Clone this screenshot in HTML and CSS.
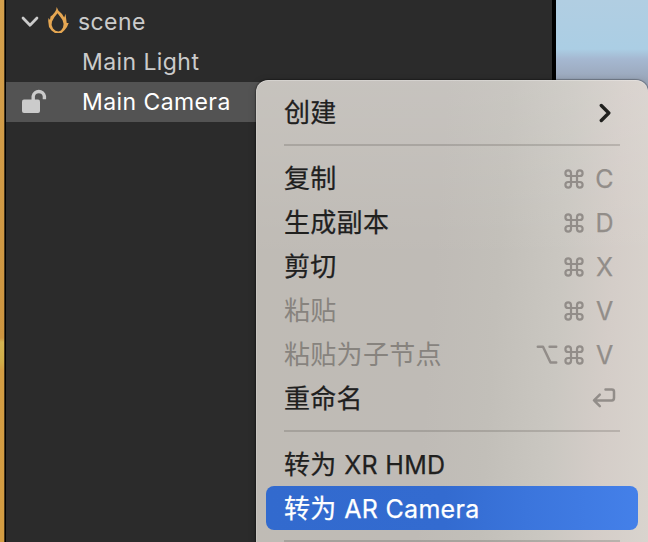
FILE: index.html
```html
<!DOCTYPE html>
<html lang="zh-CN">
<head>
<meta charset="utf-8">
<title>scene</title>
<link rel="stylesheet" href="styles.css">
</head>
<body>
<svg class="defs" aria-hidden="true">
  <symbol id="cmd" viewBox="0 0 20 20"><path d="M7 4.2V15.8A2.8 2.8 0 1 1 4.2 13H15.8A2.8 2.8 0 1 1 13 15.8V4.2A2.8 2.8 0 1 1 15.8 7H4.2A2.8 2.8 0 1 1 7 4.2Z"/></symbol>
</svg>
<div class="app">
  <div class="edge"></div>
  <div class="tree">
    <div class="row root">
      <svg class="arrow" viewBox="0 0 18 12"><path d="M2 2L9 9.3L16 2"/></svg>
      <svg class="flame" viewBox="0 0 22 28"><path fill-rule="evenodd" d="M8.7 0L10.3 3.5L14 7L16.2 10.5L17.5 6.8L18.2 12L18.7 16L20.7 16L19 20L16.7 23L13.5 26H7L3.5 23.5L1 20L.2 14L.5 11L2 13L2.5 9.5L4.5 8L7 5L8.2 2.7ZM9.5 6.2L6.5 10L4 14.5L3.6 18L5 21.4L7.5 23.8L10.5 24.5L13 23.5L15 20.5L15.6 17L14.5 13L12 9.5Z"/></svg>
      <span class="name">scene</span>
    </div>
    <div class="row"><span class="name">Main Light</span></div>
    <div class="row selected">
      <svg class="lock" viewBox="0 0 26 26"><rect x="0" y="10.5" width="18" height="13.5" rx="2"/><path d="M11.2 11V7.2A5.7 5.7 0 0 1 22.4 7.2V10.2"/></svg>
      <span class="name">Main Camera</span>
    </div>
  </div>
  <div class="sky"></div>
</div>
<div class="menu">
  <div class="item"><span class="label">创建</span><svg class="more" viewBox="0 0 13 20"><path d="M2.3 2.5L9.8 10L2.3 17.5"/></svg></div>
  <div class="line"></div>
  <div class="item"><span class="label">复制</span><span class="keys"><svg class="cmd"><use href="#cmd"/></svg><span class="key">C</span></span></div>
  <div class="item"><span class="label">生成副本</span><span class="keys"><svg class="cmd"><use href="#cmd"/></svg><span class="key">D</span></span></div>
  <div class="item"><span class="label">剪切</span><span class="keys"><svg class="cmd"><use href="#cmd"/></svg><span class="key">X</span></span></div>
  <div class="item off"><span class="label">粘贴</span><span class="keys"><svg class="cmd"><use href="#cmd"/></svg><span class="key">V</span></span></div>
  <div class="item off"><span class="label">粘贴为子节点</span><span class="keys"><svg class="opt" viewBox="0 0 22 20"><path d="M1.8 1.8H7L14.5 17.5H20.2M13.6 1.8H20.2"/></svg><svg class="cmd"><use href="#cmd"/></svg><span class="key">V</span></span></div>
  <div class="item"><span class="label">重命名</span><svg class="return" viewBox="0 0 24 20"><path d="M13.5 1.5H19.8Q22 1.5 22 3.7V10Q22 12.4 19.8 12.4H2.2M7.8 6.7L2 12.4L7.8 18.1"/></svg></div>
  <div class="line"></div>
  <div class="item"><span class="label">转为 <span class="latin">XR HMD</span></span></div>
  <div class="item active"><span class="label">转为 <span class="latin">AR Camera</span></span></div>
  <div class="line"></div>
</div>
</body>
</html>
```

FILE: styles.css
```css
* { box-sizing: border-box; }
html, body { width: 648px; height: 542px; margin: 0; overflow: hidden; }
body { position: relative; background: #2b2b2b; font-family: Inter, "Noto Sans CJK SC", sans-serif; }
svg { display: block; flex: none; fill: none; stroke-linecap: round; stroke-linejoin: round; }
.defs { position: absolute; width: 0; height: 0; }
.app { display: flex; height: 542px; }
.edge {
  width: 6px;
  background: linear-gradient(90deg, transparent 4px, #8c6a35 4px, #000 5px),
    linear-gradient(#d4a04c 0, #cd9540 338px, #d3b352 342px, #d0ad48 362px, #d39d43 370px, #d39c42 542px);
}
.tree { width: 546px; padding-top: 2px; background: #2b2b2b; color: #cbcbcb; font-size: 23px; }
.row { display: flex; align-items: center; height: 40px; padding-left: 76px; letter-spacing: .42px; }
.root { padding-left: 15px; }
.arrow { width: 18px; height: 12px; stroke: #cbcbcb; stroke-width: 2.7; }
.flame { width: 22px; height: 28px; margin: -2px 0 0 9px; fill: #e6a752; }
.root .name { margin-left: 8px; }
.selected { padding-left: 16px; background: #535353; color: #fff; }
.lock { width: 26px; height: 26px; margin-right: 34px; fill: #cbcbcb; }
.lock path { fill: none; stroke: #cbcbcb; stroke-width: 3.4; stroke-linecap: butt; }
.sky { flex: 1; border-left: 4px solid #000; background: linear-gradient(#b1cee2 0, #abcee4 49px, #a5b8d1 59px, #9aa6b9 80px, #9aa6b9 100%); }
.menu {
  position: absolute; left: 256px; top: 80px; width: 392px; height: 480px;
  padding: 10px; border-radius: 12px; color: #20201e; font-size: 26px;
  background: linear-gradient(rgba(255,255,255,.12), rgba(255,255,255,0) 180px),
    linear-gradient(94deg, #bfbbb5 0, #bfbbb6 45%, #c2bfb9 60%, #cac7c1 75%, #d4cdc8 87%, #d9d4ce 100%);
  box-shadow: 0 0 1px 1px rgba(0,0,0,.28), 0 2px 8px rgba(0,0,0,.2), inset 0 1px rgba(255,255,255,.25), inset 1px 0 rgba(255,255,255,.15);
}
.item { display: flex; align-items: center; justify-content: space-between; height: 44px; padding: 0 24px 0 18px; border-radius: 8px; line-height: 44px; white-space: pre; }
.label { padding-top: 2px; letter-spacing: .3px; -webkit-text-stroke: .25px currentColor; }
.line { height: 2px; margin: 10px 18px; background: rgba(50,45,40,.18); }
.off { color: #87837e; }
.off .label { -webkit-text-stroke: 0; }
.active { color: #fff; background: linear-gradient(90deg, #326ace 0, #336bd0 48%, #3b75dc 70%, #4480e9 100%); }
.latin { font-size: 25px; }
.more { width: 13px; height: 20px; margin: 2px 2px 0 0; stroke: #20201e; stroke-width: 3.4; }
.keys { display: flex; align-items: center; padding-top: 2px; color: #928d89; }
.cmd { width: 20px; height: 20px; stroke: #928d89; stroke-width: 2.2; }
.opt { width: 22px; height: 20px; margin-right: 6px; stroke: #928d89; stroke-width: 2.5; }
.key { width: 19px; margin-left: 11px; text-align: center; font-size: 25px; -webkit-text-stroke: .25px currentColor; }
.return { width: 24px; height: 20px; margin-right: -2px; stroke: #928d89; stroke-width: 2.5; }
```
